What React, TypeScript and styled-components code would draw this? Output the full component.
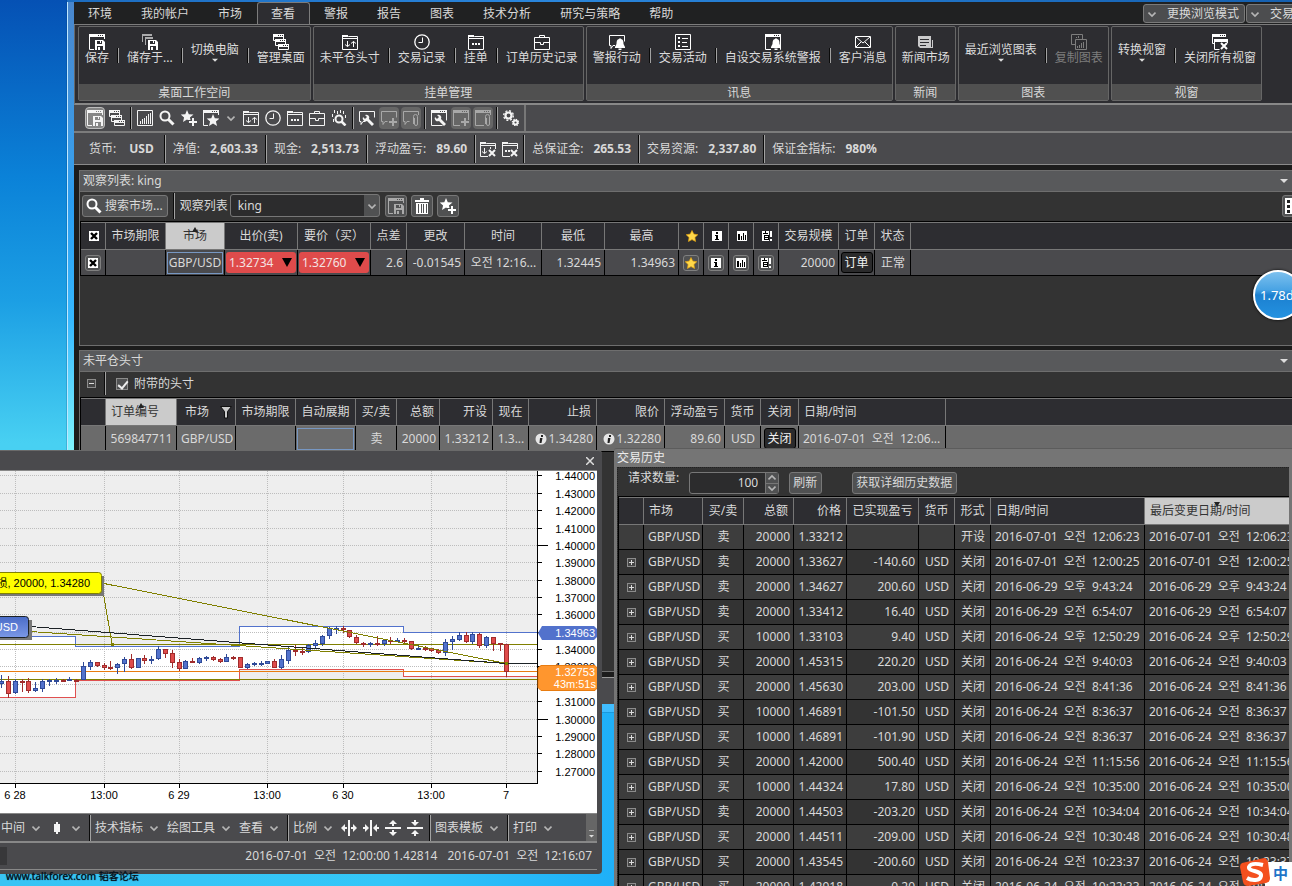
import React from "react";
import styled, { createGlobalStyle, css } from "styled-components";

const Global = createGlobalStyle`
  * { box-sizing: border-box; }
  html, body { margin: 0; height: 100%; overflow: hidden; }
  body, button, input, select {
    font-family: "Noto Sans", "Noto Sans CJK SC", sans-serif;
    font-size: 12px;
    line-height: 16px;
    color: #d9d9d9;
  }
  button { cursor: default; }
`;

/* ---------- icons, all on a 16 x 16 grid; class "cut" takes the colour of the ground ---------- */

const Win = (
  <>
    <path d="M.5 .5h15v15H.5z" fill="none" stroke="currentColor" />
    <path d="M0 0h16v3H0z" />
    <path className="cut" d="M9 1h1v1H9zM11 1h1v1h-1zM13 1h1v1h-1z" />
    <path className="cut" d="M4 3h1v1H4z" />
  </>
);
const Folder = (
  <>
    <path d="M.5 15.5V1.5h5l1 1h9v13z" fill="none" stroke="currentColor" />
    <path d="M0 4h16v1H0zM0 1h6v2H0z" />
  </>
);
const Floppy = (
  <>
    <path className="cut" d="M5 5h11v11H5z" />
    <path d="M6 6h8l2 2v8H6z" />
    <path className="cut" d="M8 7h5v3H8zM8 12h6v4H8z" />
    <path d="M11 7h1v2h-1zM9 13h2v3H9z" />
  </>
);
const Star = (
  <path d="M6 0l1.800 4.200 4.700.3-3.600 3 1.200 4.500L6 9.500 2 12l1.100-4.500L-.3 4.500l4.600-.3z" />
);
const BigPlus = (
  <>
    <path className="cut" d="M7 10h3V7h4v3h2v6H7z" />
    <path d="M11 8h2v3h3v2h-3v3h-2v-3H8v-2h3z" />
  </>
);
const Wrench = (
  <>
    <path className="cut" d="M5 4h5l6 7v5h-4L5 9z" />
    <path d="M6 5a3 3 0 0 1 4 4l5 5-2 2-5-5a3 3 0 0 1-4-4l2 2 2-2z" />
  </>
);
const Bubble = (
  <path d="M6.500 11.500H4l-2 3v-3H.5v-10h15v6" fill="none" stroke="currentColor" />
);
const Bell = (
  <>
    <path className="cut" d="M6 4h9v12H6z" />
    <path d="M11 4l1 1c2 .5 2.500 2 2.500 5l1.500 3v1H6v-1l1.500-3c0-3 .5-4.500 2.500-5zM9.500 14.500h3V16h-3z" />
  </>
);
const Clip = (
  <>
    <path className="cut" d="M9 5h7v11H9z" />
    <path d="M10.500 14V6.500a2 2 0 0 1 4 0V14a1.500 1.500 0 0 1-3 0V8" fill="none" stroke="currentColor" />
  </>
);
const Stack = (
  <>
    <path d="M0 0h11v3H0zM2 5h11v3H2zM5 10h11v3H5z" />
    <path
      d="M.5 3v3.500h2M10.500 3v2M2.500 8v3.500h3M12.500 8v2M5.500 12v3.500h10V12"
      fill="none"
      stroke="currentColor"
    />
    <path className="cut" d="M5 1h1v1H5zM7 1h1v1H7zM9 1h1v1H9zM7 6h1v1H7zM9 6h1v1H9zM11 6h1v1h-1zM10 11h1v1h-1zM12 11h1v1h-1zM14 11h1v1h-1z" />
  </>
);
const Cross = <path d="M9 9l6 6M15 9l-6 6" stroke="currentColor" strokeWidth="2" fill="none" />;
const CrossGround = <path className="cut" d="M8 8h8v8H8z" />;

const glyphs: Record<string, React.ReactNode> = {
  save: <>{Win}{Floppy}</>,
  saveAs: (
    <>
      <path d="M0 0h10v2H0zM0 2h1v6H0zM3 3h8v2H3zM3 5h1v6H3z" opacity=".6" />
      {Floppy}
    </>
  ),
  stack: Stack,
  folderArrows: (
    <>
      {Folder}
      <path d="M5.500 7v5.500M3 10.500l2.500 2 2.500-2M11.500 13V7.500M9 9.500l2.500-2 2.500 2" fill="none" stroke="currentColor" />
    </>
  ),
  clock: (
    <>
      <circle cx="8" cy="8" r="7.200" fill="none" stroke="currentColor" strokeWidth="1.300" />
      <path d="M8.500 3.500v5h-4" fill="none" stroke="currentColor" />
    </>
  ),
  folderDots: <>{Folder}<path d="M4 9h2v2H4zM7 9h2v2H7zM10 9h2v2h-2z" /></>,
  briefcase: (
    <path d="M.5 3.500h15v12H.5zM5.500 3V1.500h5V3M1 8.500h5.500v2h3v-2H15" fill="none" stroke="currentColor" />
  ),
  alert: <>{Bubble}{Bell}</>,
  list: (
    <>
      <path d="M.5 .5h15v15H.5z" fill="none" stroke="currentColor" />
      <path d="M3 3h2v2H3zM3 7h2v2H3zM3 11h2v2H3zM7 4h6v1H7zM7 8h5v1H7zM7 12h6v1H7z" />
    </>
  ),
  winBell: <>{Win}{Bell}</>,
  mail: (
    <path d="M.5 2.500h15v11H.5zM1 3l7 6 7-6M1 13l5-5M15 13l-5-5" fill="none" stroke="currentColor" />
  ),
  news: (
    <>
      <path d="M0 2h13v4h2v8H2l-2-2z" opacity=".75" />
      <path className="cut" d="M2 5h9v1H2zM2 8h9v1H2zM2 11h6v1H2zM13 6h1v7h-1z" />
    </>
  ),
  copyChart: (
    <>
      <path d="M.5 .5h11v10H.5z" fill="none" stroke="currentColor" />
      <path className="cut" d="M4.500 5.500h11v10h-11z" stroke="currentColor" />
      <path d="M6 12h1v2H6zM8 11h1v3H8zM10 9h1v5h-1zM12 8h1v6h-1zM5 3h1v1H5zM7 2h1v2H7z" />
    </>
  ),
  closeAll: (
    <>
      <path d="M0 0h14v3H0zM2 5h14v3H2z" />
      <path d="M.5 3v6.500h2M2.500 8v7.500h5M15.500 8v1" fill="none" stroke="currentColor" />
      <path className="cut" d="M8 1h1v1H8zM10 1h1v1h-1zM12 1h1v1h-1z" />
      {Cross}
    </>
  ),
  chart: (
    <>
      <path d="M.5 .5h15v15H.5z" fill="none" stroke="currentColor" />
      <path d="M3 11h1v3H3zM5 9h1v5H5zM7 8h1v6H7zM9 6h1v8H9zM11 4h1v10h-1zM13 3h1v11h-1z" />
    </>
  ),
  search: (
    <>
      <circle cx="6" cy="6" r="4.500" fill="none" stroke="currentColor" strokeWidth="2" />
      <path d="M9.500 9.500l5 5" stroke="currentColor" strokeWidth="3" />
    </>
  ),
  starPlus: <>{Star}{BigPlus}</>,
  winStar: (
    <>
      {Win}
      <path className="cut" d="M5 5h11v11H5z" />
      <g transform="translate(4 4)">{Star}</g>
    </>
  ),
  scan: (
    <>
      <circle cx="8" cy="9" r="3.500" fill="none" stroke="currentColor" strokeWidth="2" />
      <path d="M10.500 11.500l4 4" stroke="currentColor" strokeWidth="2.500" />
      <path d="M3.500 0v3M6.500 1v3M9.500 0v3M12.500 1v3M1.500 4v3M14.500 5v3M2.500 9v3" stroke="currentColor" fill="none" />
    </>
  ),
  bubbleWrench: <>{Bubble}{Wrench}</>,
  bubblePlus: <>{Bubble}{BigPlus}</>,
  bubbleClip: <>{Bubble}{Clip}</>,
  winWrench: <>{Win}{Wrench}</>,
  winPlus: <>{Win}{BigPlus}</>,
  winClip: <>{Win}{Clip}</>,
  gears: (
    <g fill="none" stroke="currentColor">
      <circle cx="5.500" cy="5.500" r="3" strokeWidth="2.200" />
      <circle cx="5.500" cy="5.500" r="4.800" strokeWidth="1.400" strokeDasharray="2 1.770" />
      <circle cx="12.500" cy="12.500" r="2" strokeWidth="1.800" />
      <circle cx="12.500" cy="12.500" r="3.200" strokeWidth="1.200" strokeDasharray="1.300 1.210" />
    </g>
  ),
  folderX: (
    <>
      {Folder}
      <path d="M4.500 7v5.500M2 10.500l2.500 2 2.500-2M10.500 6v2" fill="none" stroke="currentColor" />
      {CrossGround}
      {Cross}
    </>
  ),
  dotsX: (
    <>
      {Folder}
      <path d="M3 9h2v2H3zM6 9h2v2H6z" />
      {CrossGround}
      {Cross}
    </>
  ),
  trash: (
    <path d="M6 0h4v2h5v2H1V2h5zM2 5h12v11H2zM4 6v9h1V6zM7 6v9h1V6zM9 6v9h1V6zM12 6v9h1V6z" fillRule="evenodd" />
  ),
  grid: (
    <>
      <path d="M0 0h16v16H0z" />
      <path d="M2 2h3v3H2zM7 2h3v3H7zM12 2h3v3h-3zM2 7h3v3H2zM7 7h3v3H7zM12 7h3v3h-3zM2 12h3v3H2zM7 12h3v3H7zM12 12h3v3h-3z" fill="#222" />
    </>
  ),
  candle: <path d="M7 2h2v2h2v8H9v2H7v-2H5V4h2z" />,
  widen: <path d="M7 0h2v16H7zM0 8l4-4v3h2v2H4v3zM16 8l-4-4v3h-2v2h2v3z" />,
  narrow: <path d="M7 0h2v16H7zM6 8L2 4v3H0v2h2v3zM10 8l4-4v3h2v2h-2v3z" />,
  taller: <path d="M0 7h16v2H0zM8 0l4 4H9v2H7V4H4zM8 16l4-4H9v-2H7v2H4z" />,
  shorter: <path d="M0 7h16v2H0zM8 6l4-4H9V0H7v2H4zM8 10l4 4H9v2H7v-2H4z" />,
  boxX: (
    <>
      <path d="M3 3h10v10H3z" fill="#fff" />
      <path d="M5 5l6 6M11 5l-6 6" stroke="#000" strokeWidth="2.400" />
    </>
  ),
  gold: (
    <path d="M8 2.500l1.800 3.600 4 .6-2.900 2.800.7 4L8 11.600l-3.600 1.900.7-4L2.200 6.700l4-.6z" fill="#ffd84a" stroke="#e0a010" strokeWidth=".7" />
  ),
  info: (
    <>
      <path d="M3 3h10v10H3z" fill="#fff" />
      <path d="M7 4h2v2H7zM6 7h3v4h1v1H6v-1h1V8H6z" fill="#000" />
    </>
  ),
  bars: (
    <>
      <path d="M3 3h10v10H3z" fill="#fff" />
      <path d="M4 6h2v6H4zM7 8h1v4H7zM9 5h1v7H9zM11 7h1v5h-1z" fill="#000" />
    </>
  ),
  docAlert: (
    <>
      <path d="M3 3h7v10H3zM11 3h2v6h-2zM11 11h2v2h-2z" fill="#fff" />
      <path d="M4 5h5v1H4zM5 7h5v5H5zM6 3h1v2H6z" fill="#000" />
      <path d="M6 8h3v1H6zM6 10h3v1H6z" fill="#fff" />
    </>
  ),
  infoDot: (
    <>
      <circle cx="8" cy="8" r="5.500" fill="#e6e6e6" />
      <path d="M8 4h2v2H8zM7 7h2.500L8.500 12H6.500z" fill="#222" />
    </>
  ),
  filter: <path d="M2.500 2.500h11L9.500 7.500V14h-3V7.500z" fill="#ccc" stroke="#111" />,
};

const Svg = styled.svg`
  display: block;
  flex: none;
  fill: currentColor;
  .cut { fill: var(--ground, #2d2d31); }
`;
const Icon = ({ name }: { name: string }) => (
  <Svg width="16" height="16" viewBox="0 0 16 16" aria-hidden="true">{glyphs[name]}</Svg>
);
const Chevron = () => (
  <Svg width="8" height="8" viewBox="0 0 8 8" aria-hidden="true">
    <path d="M.5 2.500L4 6l3.500-3.500" fill="none" stroke="#b5b5b5" strokeWidth="1.600" />
  </Svg>
);
const Down = ({ size = 8 }: { size?: number }) => (
  <Svg width={size} height="5" viewBox="0 0 8 5" aria-hidden="true"><path d="M0 0h8L4 4z" fill="#ddd" /></Svg>
);

/* ---------- desktop and windows ---------- */

const Desktop = styled.main`
  position: relative;
  height: 100vh;
  min-height: 600px;
  overflow: hidden;
  background:
    linear-gradient(to right, #38c4f4, #34c6f8 30%, #10a0f8 60%, #0c90f6) bottom / 100% 174px no-repeat,
    linear-gradient(to bottom, #0551b4, #0b82d8 20%, #1c9fe4 34%, #48d0f2 50%);
`;
const MainWindow = styled.section`
  position: absolute;
  inset: 0 0 174px 67px;
  display: flex;
  flex-direction: column;
  padding: 2px 0 8px 7px;
  background:
    linear-gradient(to right, #1c6cc0, #2a86dc 40%, #1560b0) top / 100% 2px no-repeat,
    linear-gradient(to right, #bfe8ff 1px, transparent 1px) left / 7px 100% no-repeat,
    linear-gradient(to bottom, #4a86cc, #3a9ce8 22%, #2a9cf0 28%, #36b8ff 45%, #80f4ff 63%, #3fbcff);
  box-shadow: 0 0 1px #042c5c;
`;
const MenuBar = styled.nav`
  display: flex;
  flex: none;
  height: 23px;
  overflow: hidden;
  background: #202122;
  border-bottom: 1px solid #7c7c7c;
`;
const MenuItem = styled.button<{ $active?: boolean }>`
  flex: none;
  height: 23px;
  padding: 0 14px 0 13px;
  border: 1px solid transparent;
  border-bottom: 0;
  background: none;
  white-space: nowrap;
  ${(p) => p.$active && css`
    background: #2d2d31;
    border-color: #7c7c7c;
    border-radius: 3px 3px 0 0;
  `}
`;
const Spacer = styled.div` flex: 1; `;
const ModeButton = styled.button<{ $last?: boolean }>`
  display: flex;
  flex: none;
  align-items: center;
  gap: 11px;
  width: 102px;
  height: 19px;
  margin: 2px ${(p) => (p.$last ? "-56px" : "1px")} 0 0;
  padding: 0 4px;
  border: 1px solid #7a7a7a;
  border-radius: 3px;
  background: #4c4d4f;
  white-space: nowrap;
`;
const Ribbon = styled.div`
  display: flex;
  flex: none;
  gap: 2px;
  height: 80px;
  padding: 1px 4px 2px 3px;
  border-left: 1px solid #666;
  border-bottom: 2px solid #888;
  background: #2d2d31;
  overflow: hidden;
`;
const Group = styled.section`
  display: flex;
  flex: none;
  flex-direction: column;
  border: 1px solid #666;
  border-radius: 2px;
`;
const GroupBody = styled.div`
  display: flex;
  flex: 1;
  padding: 7px 5px 0 6px;
`;
const GroupTitle = styled.h2`
  margin: 0;
  height: 16px;
  background: #505050;
  font-size: 12px;
  line-height: 17px;
  font-weight: 400;
  text-align: center;
`;
const RibbonButton = styled.button<{ $menu?: boolean; $off?: boolean }>`
  display: flex;
  flex-direction: column;
  align-items: center;
  align-self: flex-start;
  padding: ${(p) => (p.$menu ? "8px" : "0")} 0 0;
  border: 0;
  background: none;
  line-height: 16px;
  white-space: nowrap;
  color: ${(p) => (p.$off ? "#7d7d7d" : "#dcdcdc")};
  svg { color: ${(p) => (p.$off ? "#7d7d7d" : "#fff")}; }
`;
const Divider = styled.i<{ $h: number; $m?: string }>`
  flex: none;
  width: 2px;
  height: ${(p) => p.$h}px;
  margin: ${(p) => p.$m ?? "0"};
  border-left: 1px solid #0a0a0a;
  border-right: 1px solid #a2a2a2;
`;
const ToolBar = styled.div`
  --ground: #4a4a4d;
  display: flex;
  flex: none;
  align-items: center;
  gap: 2px;
  height: 28px;
  padding-left: 11px;
  border-bottom: 2px solid #7c7c7c;
  background: #4a4a4d;
`;
const ToolButton = styled.button<{ $look?: "on" | "off"; $narrow?: boolean }>`
  display: flex;
  flex: none;
  align-items: center;
  justify-content: center;
  width: ${(p) => (p.$narrow ? 16 : 20)}px;
  height: 22px;
  padding: 0;
  border: 0;
  border-radius: 4px;
  background: none;
  color: #f4f4f4;
  ${(p) => p.$look === "on" && css`
    --ground: #858585;
    background: #858585;
    border: 1px solid #bdbdbd;
  `}
  ${(p) => p.$look === "off" && css`
    --ground: #666;
    background: #666;
    color: #a8a8a8;
  `}
`;
const ToolEnd = styled.i`
  align-self: stretch;
  width: 2px;
  margin-left: 1px;
  background: #777;
`;
const Account = styled.dl`
  --ground: #4a4a4d;
  display: flex;
  flex: none;
  align-items: center;
  height: 32px;
  margin: 0;
  padding-left: 8px;
  border-bottom: 1px solid #8a8a8a;
  background: #4a4a4d;
`;
const Figure = styled.div<{ $first?: boolean }>`
  display: flex;
  gap: ${(p) => (p.$first ? 13 : 10)}px;
  padding: 0 ${(p) => (p.$first ? 10 : 7)}px 0 7px;
  white-space: nowrap;
  dt, dd { margin: 0; }
  dd { font-weight: 700; }
`;
const FigureTools = styled.div`
  display: flex;
  gap: 2px;
  padding: 0 3px 0 2px;
`;
const Body = styled.div`
  display: flex;
  flex: 1;
  flex-direction: column;
  gap: 4px;
  min-height: 0;
  padding: 5px 0 5px 5px;
  background: #1c1c1c;
`;
const Panel = styled.section<{ $h?: number }>`
  display: flex;
  flex-direction: column;
  flex: ${(p) => (p.$h ? `0 0 ${p.$h}px` : "1 1 0")};
  min-height: 0;
  overflow: hidden;
  border: 1px solid #6e6e6e;
  border-right: 0;
  background: #333;
`;
const PanelTitle = styled.header`
  display: flex;
  flex: none;
  align-items: center;
  justify-content: space-between;
  height: 21px;
  padding: 0 4px 0 3px;
  border-bottom: 1px solid #6e6e6e;
  background: #58595b;
  h2 { margin: 0; font-size: 12px; font-weight: 400; }
`;
const PanelTools = styled.div<{ $h: number; $indent: number }>`
  display: flex;
  flex: none;
  align-items: center;
  height: ${(p) => p.$h}px;
  padding: 0 0 2px ${(p) => p.$indent}px;
`;
const StatusStrip = styled.footer`
  flex: none;
  height: 27px;
  border-top: 1px solid #9a9a9a;
  background: #4a4a4d;
`;
const raised = css`
  --ground: #505152;
  border: 1px solid #777;
  border-radius: 3px;
  background: #505152;
`;
const PushButton = styled.button`
  ${raised}
  display: flex;
  flex: none;
  align-items: center;
  gap: 3px;
  height: 22px;
  padding: 0 4px 0 3px;
  white-space: nowrap;
  svg { color: #fff; }
`;
const SquareButton = styled.button<{ $off?: boolean; $cut?: boolean }>`
  ${raised}
  display: flex;
  flex: none;
  align-items: center;
  justify-content: center;
  width: 22px;
  height: 22px;
  margin-right: ${(p) => (p.$cut ? "-12px" : "4px")};
  padding: 0;
  color: ${(p) => (p.$off ? "#aaa" : "#fff")};
`;
const SelectBox = styled.span`
  display: flex;
  align-items: center;
  position: relative;
  width: 150px;
  height: 23px;
  margin: 0 5px 0 2px;
  border: 1px solid #777;
  border-radius: 3px;
  background: linear-gradient(to right, #2c2c2d calc(100% - 15px), #505152 0);
  select {
    appearance: none;
    flex: 1;
    height: 21px;
    padding: 0 20px 0 7px;
    border: 0;
    background: none;
  }
  svg { position: absolute; right: 3px; pointer-events: none; }
`;
const TreeToggle = styled.button`
  position: relative;
  display: block;
  width: 9px;
  height: 9px;
  margin: 0 auto;
  padding: 0;
  border: 1px solid #8c8c8c;
  background: #444;
  &::before {
    content: "";
    position: absolute;
    inset: 3px 1px;
    background: #ddd;
  }
  &[data-open="false"]::after {
    content: "";
    position: absolute;
    inset: 1px 3px;
    background: #ddd;
  }
`;
const ToggleSlot = styled.span` width: 9px; `;
const CheckLabel = styled.label`
  display: flex;
  align-items: center;
  gap: 6px;
  input {
    appearance: none;
    position: relative;
    width: 12px;
    height: 12px;
    margin: 0;
    border: 1px solid #8c8c8c;
    background: #505152;
  }
  input:checked::before {
    content: "";
    position: absolute;
    left: 3px;
    top: 0;
    width: 4px;
    height: 8px;
    border: solid #eee;
    border-width: 0 2px 2px 0;
    transform: rotate(40deg);
  }
`;

/* ---------- tables ---------- */

const Table = styled.table`
  width: 100%;
  table-layout: fixed;
  border-spacing: 0;
  border-top: 1px solid #000;
  border-left: 1px solid #000;
`;
type Align = "left" | "center" | "right";
const Th = styled.th<{ $align?: Align; $sort?: boolean }>`
  position: relative;
  height: 28px;
  padding: 0 5px;
  border-top: 1px solid #777;
  border-right: 1px solid #777;
  border-bottom: 1px solid #777;
  background: ${(p) => (p.$sort ? "#cbcbcb" : "#2d2d31")};
  color: ${(p) => (p.$sort ? "#333" : "#d9d9d9")};
  font-weight: 400;
  line-height: 16px;
  text-align: ${(p) => p.$align ?? "center"};
  white-space: nowrap;
  overflow: hidden;
  &:last-child { border-right: 0; }
  & > svg { margin: 0 auto; }
`;
const SortMark = styled.i<{ $down?: boolean }>`
  position: absolute;
  top: 4px;
  left: calc(50% - 3px);
  border: solid transparent;
  border-width: 0 3px;
  ${(p) => (p.$down ? "border-top: 5px solid #222" : "border-bottom: 5px solid #222")};
`;
const Funnel = styled.span`
  position: absolute;
  right: 1px;
  top: 5px;
`;
const Row = styled.tr<{ $bg: string; $h: number }>`
  background: ${(p) => p.$bg};
  td { height: ${(p) => p.$h}px; }
`;
const Td = styled.td<{ $align?: Align; $tight?: boolean }>`
  padding: 0 ${(p) => (p.$tight ? "1px" : "3px 0 4px")};
  border-right: 1px solid #000;
  border-bottom: 1px solid #000;
  line-height: 16px;
  text-align: ${(p) => p.$align ?? "center"};
  white-space: nowrap;
  overflow: hidden;
  &:last-child { border-right: 0; }
`;
const Focus = styled.span`
  display: block;
  height: 22px;
  line-height: 20px;
  border: 1px solid #7797c2;
  overflow: hidden;
`;
const Price = styled.button`
  display: flex;
  align-items: center;
  justify-content: space-between;
  width: 100%;
  height: 21px;
  padding: 0 4px 0 3px;
  border: 0;
  border-radius: 3px;
  background: #df4b4b;
  color: #f4e2e2;
`;
const DarkButton = styled.button`
  width: 32px;
  height: 21px;
  padding: 0;
  border: 1px solid #000;
  border-radius: 3px;
  background: #2a2a2b;
  color: #f2f2f2;
`;
const CellButton = styled.button`
  display: flex;
  align-items: center;
  justify-content: center;
  width: 16px;
  height: 16px;
  padding: 0;
  border: 1px solid #808080;
  border-radius: 3px;
  background: #505152;
`;
const WithInfo = styled.span`
  display: flex;
  align-items: center;
  justify-content: flex-end;
`;
const StampText = styled.time`
  white-space: nowrap;
  span { margin: 0 3px; }
`;
/* date, half of the day, time */
const Stamp = ({ children }: { children: string }) => {
  const [day, half, ...rest] = children.split(" ");
  return <StampText>{day} <span>{half}</span> {rest.join(" ")}</StampText>;
};
const cols = (ws: number[]) => (
  <colgroup>
    {ws.map((w, i) => <col key={i} style={w ? { width: w } : undefined} />)}
  </colgroup>
);
const Arrow = () => (
  <Svg width="10" height="9" viewBox="0 0 10 9" aria-hidden="true"><path d="M0 0h10L5 9z" fill="#000" /></Svg>
);

/* ---------- history window ---------- */

const HistoryWindow = styled.section`
  position: absolute;
  inset: 448px 0 0 614px;
  display: flex;
  flex-direction: column;
  overflow: hidden;
  padding: 0 3px 0 3px;
  border-top: 1px solid #5c5c5c;
  border-radius: 3px 0 0 0;
  background: #757575;
`;
const HistoryTitle = styled.h2`
  flex: none;
  height: 18px;
  margin: 0;
  font-size: 12px;
  line-height: 17px;
  font-weight: 400;
  color: #ececec;
`;
const HistoryBody = styled.div`
  flex: 1;
  min-height: 0;
  overflow: hidden;
  border-top: 1px dotted #222;
  border-left: 1px dotted #222;
  background: #333;
`;
const HistoryTools = styled.div`
  display: flex;
  height: 28px;
  padding: 4px 0 0 10px;
  label { margin-top: -2px; }
`;
const Stepper = styled.span`
  display: flex;
  width: 90px;
  height: 22px;
  margin: 0 10px;
  border: 1px solid #777;
  border-radius: 3px;
  background: #2c2c2d;
  input {
    flex: 1;
    min-width: 0;
    padding: 0 7px 0 0;
    border: 0;
    background: none;
    text-align: right;
  }
`;
const StepKeys = styled.span`
  display: flex;
  flex-direction: column;
  width: 13px;
  background: #505152;
  button {
    flex: 1;
    display: flex;
    align-items: center;
    justify-content: center;
    min-height: 0;
    padding: 0;
    border: 0;
    border-left: 1px solid #777;
    background: none;
  }
  button:first-child { border-bottom: 1px solid #777; }
  button:first-child svg { transform: scaleY(-1); }
`;
const Details = styled.div` margin-left: 30px; `;

/* ---------- chart window ---------- */

const ChartWindow = styled.section`
  position: absolute;
  left: 0;
  top: 450px;
  width: 602px;
  padding: 0 5px 4px 0;
  border-top: 1px solid #6a6a6a;
  border-radius: 0 4px 4px 0;
  background: #4a4a4d;
`;
const ChartTitle = styled.header`
  display: flex;
  justify-content: flex-end;
  height: 20px;
  border-bottom: 1px solid #888;
  button {
    display: flex;
    align-items: center;
    padding: 0 3px;
    border: 0;
    background: none;
  }
`;
const ChartTools = styled.div`
  display: flex;
  align-items: center;
  height: 30px;
  padding-left: 1px;
  border-top: 1px solid #888;
  border-bottom: 2px solid #888;
  svg { color: #f4f4f4; }
`;
const DropButton = styled.button`
  display: flex;
  flex: none;
  align-items: center;
  gap: 7px;
  margin-right: 9px;
  padding: 0;
  border: 0;
  background: none;
  white-space: nowrap;
`;
const ScaleKeys = styled.div`
  display: flex;
  gap: 6px;
  margin-right: 6px;
  button { padding: 0; border: 0; background: none; }
`;
const MoreStrip = styled.button`
  display: flex;
  flex-direction: column;
  align-items: center;
  justify-content: flex-end;
  gap: 3px;
  align-self: stretch;
  width: 11px;
  padding: 0 0 2px;
  border: 0;
  background: #666;
  &::before { content: ""; width: 5px; height: 1px; background: #aaa; }
`;
const ChartStatus = styled.footer`
  display: flex;
  align-items: center;
  justify-content: flex-end;
  gap: 10px;
  height: 27px;
  padding-right: 5px;
  border-bottom: 1px solid #888;
  i { width: 7px; height: 18px; margin-right: auto; background: #38383a; }
`;
const Watermark = styled.div`
  position: absolute;
  left: 6px;
  bottom: 2px;
  font-size: 10px;
  line-height: 16px;
  color: #06121c;
  text-shadow: 0 0 1px #06121c;
`;
const Plot = styled.svg`
  display: block;
  background: #fff;
  text { font: 11px "Liberation Sans", "Noto Sans CJK SC", sans-serif; fill: #000; }
`;

const gridY = [475, 493, 510, 528, 545, 562, 580, 597, 614, 632, 649, 666, 684, 701, 719, 736, 753, 771];
const gridX: [number, string][] = [
  [15, "6 28"], [104, "13:00"], [179, "6 29"], [267, "13:00"], [343, "6 30"], [431, "13:00"], [506, "7"],
];

/* x, up or down, high, low, body top, body bottom; in thirds of a pixel */
const candles: [number, "u" | "d", number, number, number, number][] = [
  [4, "u", 690, 728, 709, 717], [26, "d", 693, 758, 709, 746], [46, "u", 703, 747, 708, 743],
  [67, "d", 703, 740, 708, 712], [85, "d", 700, 744, 709, 738], [106, "u", 712, 742, 729, 738],
  [127, "u", 703, 740, 708, 731], [148, "u", 702, 722, 705, 710], [169, "u", 698, 718, 704, 707],
  [190, "d", 703, 711, 705, 708], [208, "u", 696, 707, 703, 706], [229, "d", 702, 706, 704, 706],
  [250, "u", 652, 706, 664, 706], [271, "u", 645, 675, 652, 665], [292, "d", 651, 665, 651, 664],
  [313, "d", 654, 674, 660, 668], [332, "d", 648, 674, 666, 671], [352, "u", 654, 687, 657, 668],
  [373, "u", 636, 681, 643, 658], [394, "d", 627, 672, 643, 668], [415, "u", 640, 669, 640, 668],
  [433, "d", 630, 657, 640, 647], [454, "u", 633, 657, 643, 647], [475, "u", 603, 645, 612, 643],
  [496, "d", 612, 638, 613, 626], [517, "d", 615, 669, 625, 653], [538, "d", 642, 679, 652, 671],
  [556, "u", 645, 673, 648, 671], [577, "d", 639, 655, 648, 653], [598, "u", 636, 657, 640, 654],
  [619, "u", 633, 648, 637, 641], [640, "d", 633, 648, 637, 644], [661, "d", 638, 654, 643, 650],
  [679, "u", 627, 652, 636, 650], [700, "d", 632, 646, 636, 641], [722, "d", 636, 669, 637, 668],
  [742, "u", 654, 673, 658, 668], [763, "u", 650, 662, 655, 658], [784, "u", 648, 662, 655, 658],
  [802, "u", 648, 657, 648, 656], [823, "d", 642, 670, 648, 668], [844, "u", 630, 672, 643, 668],
  [865, "u", 605, 656, 615, 647], [886, "d", 600, 634, 615, 620], [907, "d", 608, 630, 618, 623],
  [925, "u", 598, 624, 600, 622], [946, "u", 585, 608, 595, 602], [967, "u", 570, 604, 574, 596],
  [988, "u", 545, 582, 550, 574], [1009, "u", 543, 567, 548, 552], [1030, "d", 543, 564, 550, 556],
  [1048, "d", 555, 579, 556, 577], [1069, "d", 570, 598, 577, 593], [1090, "d", 592, 606, 593, 598],
  [1111, "u", 591, 606, 595, 598], [1132, "d", 573, 603, 594, 598], [1153, "u", 583, 602, 586, 598],
  [1171, "d", 576, 596, 586, 590], [1192, "u", 578, 592, 584, 588], [1213, "d", 580, 594, 585, 590],
  [1234, "d", 588, 615, 589, 611], [1255, "u", 600, 615, 608, 612], [1276, "d", 604, 618, 608, 614],
  [1294, "d", 608, 622, 609, 617], [1315, "d", 612, 628, 614, 623], [1336, "u", 583, 634, 592, 623],
  [1357, "u", 573, 614, 583, 592], [1378, "u", 562, 588, 570, 585], [1399, "d", 562, 594, 570, 590],
  [1417, "u", 562, 598, 568, 590], [1438, "d", 565, 608, 568, 602], [1459, "u", 574, 610, 577, 602],
  [1480, "d", 576, 618, 577, 596], [1501, "d", 594, 618, 595, 599], [1519, "d", 597, 695, 598, 681],
];

const Chart = () => (
  <Plot width="597" height="342" viewBox="0 471 597 342" role="img" aria-label="GBP/USD">
    <defs>
      <linearGradient id="tag" x1="0" y1="0" x2="0" y2="1">
        <stop offset="0" stopColor="#4a6cc8" /><stop offset="1" stopColor="#7b98e6" />
      </linearGradient>
    </defs>
    <g shapeRendering="crispEdges" fill="none">
      <path d="M0 471h537v312H0z" fill="#eee" />
      <path d="M0 636H75V646H239V626H403V632H537V676H403V669H239V680H75V697H0z" fill="#fff" />
      <g stroke="#bdbdbd" strokeDasharray="1 1">
        {gridY.map((y) => <path key={y} d={`M0 ${y + 0.5}H537`} />)}
        {gridX.map(([x]) => <path key={x} d={`M${x + 0.5} 471V783`} />)}
      </g>
      <path d="M0 636.500H75.500V646.500H239.500V626.500H403.500V632.500H537" stroke="#5272cc" />
      <path d="M0 697.500H75.500V680.500H239.500V669.500H403.500V676.500H537" stroke="#e05050" />
      <path d="M0 671.500H537" stroke="#e87c10" />
      <path d="M0 644.500H537M0 679.500H537" stroke="#808000" />
      {candles.map(([cx, dir, hi, lo, top, bottom]) => {
        const x = Math.floor(cx / 3);
        const y = (v: number) => Math.round(445 + v / 3);
        const up = dir === "u";
        return (
          <g key={cx} stroke={up ? "#2f4a98" : "#a02c2c"} fill={up ? "#5272cc" : "#df4b4b"}>
            <path d={`M${x + 0.5} ${y(hi)}V${y(lo)}`} />
            <rect x={x - 1.5} y={y(top) + 0.5} width="4" height={Math.max(y(bottom) - y(top) - 1, 1)} />
          </g>
        );
      })}
      <path d="M30 631.500L506 663.500M104 583.500L506 663.500M102 585L112 644" stroke="#808000" />
      <path d="M30 626.500L506 663.500H537" stroke="#1c2226" />
      <path d="M111 643h3v3h-3zM505 662h3v3h-3z" fill="#808000" />
      <path d="M537.500 471V783.500M0 783.500H538" stroke="#000" />
      {gridY.map((y, i) => <path key={y} d={`M538 ${y + 0.5}h${i === 4 || i === 14 ? 10 : 4}`} stroke="#000" />)}
      {gridX.map(([x]) => <path key={x} d={`M${x + 0.5} 784v4`} stroke="#000" />)}
    </g>
    {gridY.map((y, i) => i !== 9 && i !== 12 && (
      <text key={y} x="595" y={y + 5} textAnchor="end">{(1.44 - i / 100).toFixed(5)}</text>
    ))}
    {gridX.map(([x, label]) => <text key={x} x={x} y="799" textAnchor="middle">{label}</text>)}
    <path d="M538 633l4-7h52l3 3v8l-3 3h-52z" fill="#5272cc" />
    <text x="595" y="637" textAnchor="end" style={{ fill: "#fff" }}>1.34963</text>
    <path d="M538 668l3-2.500h54l2.500 3v19l-2.500 3h-54l-3-3z" fill="#ff962e" stroke="#e87c10" />
    <text x="595" y="676" textAnchor="end" style={{ fill: "#fff" }}>1.32753</text>
    <text x="596" y="688" textAnchor="end" style={{ fill: "#fff" }}>43m:51s</text>
    <path d="M0 576h104v20H0zM0 620h32v20H0z" fill="#777" />
    <rect x="-9.500" y="572.500" width="111" height="21" rx="3" fill="#ff0" stroke="#808000" />
    <text x="90" y="587" textAnchor="end">损, 20000, 1.34280</text>
    <rect x="-9.500" y="616.500" width="38" height="21" rx="3" fill="url(#tag)" stroke="#1c2226" />
    <text x="18" y="631" textAnchor="end" style={{ fill: "#fff" }}>USD</text>
  </Plot>
);

/* ---------- data ---------- */

type Item = { label: string; icon?: string; off?: boolean };
const ribbon: { title: string; items: Item[] }[] = [
  { title: "桌面工作空间", items: [
    { label: "保存", icon: "save" }, { label: "储存于...", icon: "saveAs" },
    { label: "切换电脑" }, { label: "管理桌面", icon: "stack" } ] },
  { title: "挂单管理", items: [
    { label: "未平仓头寸", icon: "folderArrows" }, { label: "交易记录", icon: "clock" },
    { label: "挂单", icon: "folderDots" }, { label: "订单历史记录", icon: "briefcase" } ] },
  { title: "讯息", items: [
    { label: "警报行动", icon: "alert" }, { label: "交易活动", icon: "list" },
    { label: "自设交易系统警报", icon: "winBell" }, { label: "客户消息", icon: "mail" } ] },
  { title: "新闻", items: [{ label: "新闻市场", icon: "news" }] },
  { title: "图表", items: [{ label: "最近浏览图表" }, { label: "复制图表", icon: "copyChart", off: true }] },
  { title: "视窗", items: [{ label: "转换视窗" }, { label: "关闭所有视窗", icon: "closeAll" }] },
];
const menus = ["环境", "我的帐户", "市场", "查看", "警报", "报告", "图表", "技术分析", "研究与策略", "帮助"];
const tools = [
  "save:on", "stack", "|", "chart", "search", "starPlus", "winStar", "v", "folderArrows", "clock", "folderDots",
  "briefcase", "scan", "|", "bubbleWrench", "bubblePlus:off", "bubbleClip:off", "|", "winWrench",
  "winPlus:off", "winClip:off", "|", "gears",
];
const figures = [["货币:", "USD"], ["净值:", "2,603.33"], ["现金:", "2,513.73"], ["浮动盈亏:", "89.60"]];
const margins = [["总保证金:", "265.53"], ["交易资源:", "2,337.80"], ["保证金指标:", "980%"]];

const history = [
  ["卖", "20000", "1.33212", "", "", "开设", "2016-07-01 오전 12:06:23"],
  ["卖", "20000", "1.33627", "-140.60", "USD", "关闭", "2016-07-01 오전 12:00:25"],
  ["卖", "20000", "1.34627", "200.60", "USD", "关闭", "2016-06-29 오후 9:43:24"],
  ["卖", "20000", "1.33412", "16.40", "USD", "关闭", "2016-06-29 오전 6:54:07"],
  ["买", "10000", "1.33103", "9.40", "USD", "关闭", "2016-06-24 오후 12:50:29"],
  ["买", "20000", "1.45315", "220.20", "USD", "关闭", "2016-06-24 오전 9:40:03"],
  ["买", "20000", "1.45630", "203.00", "USD", "关闭", "2016-06-24 오전 8:41:36"],
  ["买", "10000", "1.46891", "-101.50", "USD", "关闭", "2016-06-24 오전 8:36:37"],
  ["买", "10000", "1.46891", "-101.90", "USD", "关闭", "2016-06-24 오전 8:36:37"],
  ["买", "20000", "1.42000", "500.40", "USD", "关闭", "2016-06-24 오전 11:15:56"],
  ["买", "10000", "1.44324", "17.80", "USD", "关闭", "2016-06-24 오전 10:35:00"],
  ["卖", "20000", "1.44503", "-203.20", "USD", "关闭", "2016-06-24 오전 10:34:04"],
  ["买", "20000", "1.44511", "-209.00", "USD", "关闭", "2016-06-24 오전 10:30:48"],
  ["买", "20000", "1.43545", "-200.60", "USD", "关闭", "2016-06-24 오전 10:23:37"],
  ["买", "20000", "1.42918", "0.20", "USD", "关闭", "2016-06-24 오전 10:22:33"],
];

/* ---------- overlays ---------- */

const Balloon = styled.div`
  position: absolute;
  right: -11px;
  top: 270px;
  display: flex;
  align-items: center;
  width: 50px;
  height: 50px;
  padding-left: 5px;
  border: 2px solid #fff;
  border-radius: 50%;
  background: linear-gradient(to bottom, #7cc0ee, #4aa4e4 38%, #1c80d0 50%, #2492e0);
  box-shadow: 0 0 3px #000;
  color: #fff;
  font-size: 13px;
`;
const Ime = styled.div`
  position: absolute;
  right: 0;
  bottom: 0;
  display: flex;
  align-items: flex-end;
  b {
    height: 24px;
    width: 27px;
    margin-left: -5px;
    padding-left: 8px;
    background: #fff;
    font-size: 15px;
    line-height: 22px;
    color: #1f74c8;
  }
  svg { position: relative; z-index: 1; }
`;

const Figures = ({ items, first }: { items: string[][]; first?: boolean }) => (
  <>
    {items.map(([k, v], i) => (
      <React.Fragment key={k}>
        {(i > 0 || !first) && <Divider $h={28} />}
        <Figure $first={first && i === 0}><dt>{k}</dt><dd>{v}</dd></Figure>
      </React.Fragment>
    ))}
  </>
);

const Watchlist = () => (
  <Panel $h={176}>
    <PanelTitle><h2>观察列表: king</h2><Down /></PanelTitle>
    <PanelTools $h={29} $indent={2}>
      <PushButton><Icon name="search" />搜索市场...</PushButton>
      <Divider $h={26} $m="0 5px" />
      <label htmlFor="list">观察列表</label>
      <SelectBox><select id="list"><option>king</option></select><Chevron /></SelectBox>
      <SquareButton $off aria-label="保存"><Icon name="save" /></SquareButton>
      <SquareButton aria-label="删除"><Icon name="trash" /></SquareButton>
      <SquareButton aria-label="添加"><Icon name="starPlus" /></SquareButton>
      <Spacer />
      <SquareButton $cut aria-label="网格"><Icon name="grid" /></SquareButton>
    </PanelTools>
    <Table>
      {cols([25, 60, 59, 73, 73, 36, 58, 77, 63, 74, 25, 25, 25, 25, 60, 36, 36, 0])}
      <thead>
        <tr>
          <Th><Icon name="boxX" /></Th>
          <Th>市场期限</Th>
          <Th $sort>市场<SortMark /></Th>
          <Th>出价(卖)</Th>
          <Th>要价（买）</Th>
          <Th>点差</Th><Th>更改</Th><Th>时间</Th><Th>最低</Th><Th>最高</Th>
          <Th><Icon name="gold" /></Th><Th><Icon name="info" /></Th>
          <Th><Icon name="bars" /></Th><Th><Icon name="docAlert" /></Th>
          <Th>交易规模</Th><Th>订单</Th><Th>状态</Th><Th />
        </tr>
      </thead>
      <tbody>
        <Row $bg="#4a4a4d" $h={26}>
          <Td><CellButton aria-label="移除"><Icon name="boxX" /></CellButton></Td>
          <Td />
          <Td $tight><Focus>GBP/USD</Focus></Td>
          <Td $tight><Price>1.32734<Arrow /></Price></Td>
          <Td $tight><Price>1.32760<Arrow /></Price></Td>
          <Td $align="right">2.6</Td>
          <Td $align="right">-0.01545</Td>
          <Td>오전 12:16...</Td>
          <Td $align="right">1.32445</Td>
          <Td $align="right">1.34963</Td>
          {["gold", "info", "bars", "docAlert"].map((n) => (
            <Td key={n}><CellButton aria-label={n}><Icon name={n} /></CellButton></Td>
          ))}
          <Td $align="right">20000</Td>
          <Td $tight><DarkButton>订单</DarkButton></Td>
          <Td>正常</Td>
          <Td />
        </Row>
      </tbody>
    </Table>
  </Panel>
);

const Positions = () => (
  <Panel>
    <PanelTitle><h2>未平仓头寸</h2><Down /></PanelTitle>
    <PanelTools $h={25} $indent={7}>
      <ToggleSlot><TreeToggle data-open="true" aria-label="折叠" /></ToggleSlot>
      <Divider $h={23} $m="0 10px 0 8px" />
      <CheckLabel><input type="checkbox" defaultChecked /><span>附带的头寸</span></CheckLabel>
    </PanelTools>
    <Table>
      {cols([25, 71, 59, 60, 60, 41, 43, 53, 36, 68, 68, 60, 36, 38, 147, 0])}
      <thead>
        <tr>
          <Th />
          <Th $sort $align="left">订单编号<SortMark /></Th>
          <Th $align="left">&nbsp;市场<Funnel><Icon name="filter" /></Funnel></Th>
          <Th>市场期限</Th><Th>自动展期</Th><Th>买/卖</Th>
          <Th $align="right">总额</Th><Th $align="right">开设</Th><Th>现在</Th>
          <Th $align="right">止损</Th><Th $align="right">限价</Th>
          <Th>浮动盈亏</Th><Th>货币</Th><Th>关闭</Th><Th $align="left">日期/时间</Th><Th />
        </tr>
      </thead>
      <tbody>
        <Row $bg="#6b6b6b" $h={26}>
          <Td />
          <Td>569847711</Td><Td>GBP/USD</Td><Td />
          <Td $tight><Focus /></Td>
          <Td>卖</Td>
          <Td $align="right">20000</Td><Td $align="right">1.33212</Td><Td>1.3...</Td>
          <Td $align="right"><WithInfo><Icon name="infoDot" />1.34280</WithInfo></Td>
          <Td $align="right"><WithInfo><Icon name="infoDot" />1.32280</WithInfo></Td>
          <Td $align="right">89.60</Td><Td>USD</Td>
          <Td $tight><DarkButton>关闭</DarkButton></Td>
          <Td $align="left"><Stamp>2016-07-01 오전 12:06...</Stamp></Td>
          <Td />
        </Row>
      </tbody>
    </Table>
  </Panel>
);

const History = () => (
  <HistoryWindow>
    <HistoryTitle>交易历史</HistoryTitle>
    <HistoryBody>
      <HistoryTools>
        <label htmlFor="count">请求数量:</label>
        <Stepper>
          <input id="count" defaultValue="100" />
          <StepKeys>
            <button aria-label="增加"><Chevron /></button>
            <button aria-label="减少"><Chevron /></button>
          </StepKeys>
        </Stepper>
        <PushButton>刷新</PushButton>
        <Details><PushButton>获取详细历史数据</PushButton></Details>
      </HistoryTools>
      <Table>
        {cols([25, 59, 41, 50, 53, 72, 36, 36, 154, 0])}
        <thead>
          <tr>
            <Th /><Th $align="left">市场</Th><Th>买/卖</Th>
            <Th $align="right">总额</Th><Th $align="right">价格</Th><Th>已实现盈亏</Th>
            <Th>货币</Th><Th>形式</Th><Th $align="left">日期/时间</Th>
            <Th $align="left" $sort>最后变更日期/时间<SortMark $down /></Th>
          </tr>
        </thead>
        <tbody>
          {history.map(([side, size, price, pnl, cur, kind, at], i) => (
            <Row key={i} $bg={i % 2 ? "#333" : "#3d3d3d"} $h={25}>
              <Td>{i > 0 && <TreeToggle data-open="false" aria-label="展开" />}</Td>
              <Td $align="left">GBP/USD</Td>
              <Td>{side}</Td>
              <Td $align="right">{size}</Td>
              <Td $align="right">{price}</Td>
              <Td $align="right">{pnl}</Td>
              <Td>{cur}</Td>
              <Td>{kind}</Td>
              <Td $align="left"><Stamp>{at}</Stamp></Td>
              <Td $align="left"><Stamp>{at}</Stamp></Td>
            </Row>
          ))}
        </tbody>
      </Table>
    </HistoryBody>
  </HistoryWindow>
);

const Drop = ({ children }: { children: React.ReactNode }) => (
  <DropButton>{children}<Chevron /></DropButton>
);

export default function App() {
  return (
    <Desktop>
      <Global />
      <MainWindow>
        <MenuBar>
          {menus.map((m) => <MenuItem key={m} $active={m === "查看"}>{m}</MenuItem>)}
          <Spacer />
          <ModeButton><Chevron />更换浏览模式</ModeButton>
          <ModeButton $last><Chevron />交易模式</ModeButton>
        </MenuBar>
        <Ribbon>
          {ribbon.map((g) => (
            <Group key={g.title}>
              <GroupBody>
                {g.items.map((it, i) => (
                  <React.Fragment key={it.label}>
                    {i > 0 && <Divider $h={15} $m="14px 8px 0" />}
                    <RibbonButton $menu={!it.icon} $off={it.off}>
                      {it.icon && <Icon name={it.icon} />}
                      {it.label}
                      {!it.icon && <Down size={6} />}
                    </RibbonButton>
                  </React.Fragment>
                ))}
              </GroupBody>
              <GroupTitle>{g.title}</GroupTitle>
            </Group>
          ))}
        </Ribbon>
        <ToolBar>
          {tools.map((t, i) => {
            if (t === "|") return <Divider key={i} $h={22} $m="0 1px" />;
            const [name, look] = t.split(":");
            return name === "v"
              ? <ToolButton key={i} $narrow aria-label="更多"><Chevron /></ToolButton>
              : <ToolButton key={i} $look={look as "on" | "off"} aria-label={name}><Icon name={name} /></ToolButton>;
          })}
          <ToolEnd />
        </ToolBar>
        <Account>
          <Figures items={figures} first />
          <Divider $h={28} />
          <FigureTools>
            <ToolButton aria-label="全部平仓"><Icon name="folderX" /></ToolButton>
            <ToolButton aria-label="全部取消"><Icon name="dotsX" /></ToolButton>
          </FigureTools>
          <Figures items={margins} />
        </Account>
        <Body>
          <Watchlist />
          <Positions />
        </Body>
        <StatusStrip />
      </MainWindow>

      <ChartWindow>
        <ChartTitle>
          <button aria-label="关闭">
            <Svg width="8" height="8" viewBox="0 0 8 8"><path d="M0 0l8 8M8 0L0 8" stroke="#ddd" strokeWidth="1.500" /></Svg>
          </button>
        </ChartTitle>
        <Chart />
        <ChartTools>
          <Drop>中间</Drop>
          <Drop><Icon name="candle" /></Drop>
          <Divider $h={26} $m="0 4px 0 0" />
          <Drop>技术指标</Drop>
          <Drop>绘图工具</Drop>
          <Drop>查看</Drop>
          <Divider $h={26} $m="0 4px 0 0" />
          <Drop>比例</Drop>
          <ScaleKeys>
            {["widen", "narrow", "taller", "shorter"].map((n) => (
              <button key={n} aria-label={n}><Icon name={n} /></button>
            ))}
          </ScaleKeys>
          <Divider $h={26} $m="0 4px 0 0" />
          <Drop>图表模板</Drop>
          <Divider $h={26} $m="0 4px 0 0" />
          <Drop>打印</Drop>
          <Spacer />
          <MoreStrip aria-label="更多"><Down size={5} /></MoreStrip>
        </ChartTools>
        <ChartStatus>
          <i />
          <Stamp>2016-07-01 오전 12:00:00 1.42814</Stamp>
          <Stamp>2016-07-01 오전 12:16:07</Stamp>
        </ChartStatus>
      </ChartWindow>

      <Watermark>www.talkforex.com 韬客论坛</Watermark>

      <History />

      <Balloon>1.78d</Balloon>
      <Ime>
        <Svg width="30" height="28" viewBox="0 0 30 28" aria-hidden="true">
          <path d="M2 5L24 0q3 0 4 4l2 16q0 4-4 5L8 28q-4 0-5-4L0 9q0-3 2-4z" fill="#f4501e" />
          <path d="M23 7q-12-3-14 2c-1 5 13 3 12 9-1 5-9 5-14 2" fill="none" stroke="#fff" strokeWidth="4" />
        </Svg>
        <b>中</b>
      </Ime>
    </Desktop>
  );
}
